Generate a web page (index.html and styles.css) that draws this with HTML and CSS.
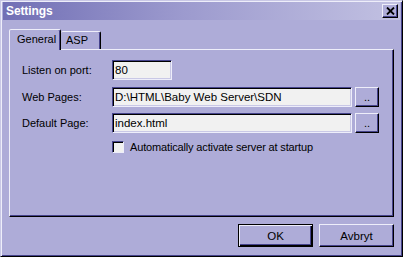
FILE: index.html
```html
<!DOCTYPE html>
<html lang="en">
<head>
  <meta charset="UTF-8" />
  <title>Settings</title>
  <link rel="stylesheet" href="styles.css">
</head>
<body>
  <div class="window">
    <div class="titlebar">
      <span class="title">Settings</span>
      <span class="close">
        <svg width="9" height="8" viewBox="0 0 9 8"><path d="M1 0.5 L8 7.5 M8 0.5 L1 7.5" stroke="#000" stroke-width="1.8" fill="none"/></svg>
      </span>
    </div>
    <div class="content">
      <div class="tabs">
        <div class="tab active">General</div>
        <div class="tab">ASP</div>
      </div>
      <div class="panel">
        <div class="row">
          <label>Listen on port:</label>
          <input class="field port" type="text" value="80" />
        </div>
        <div class="row">
          <label>Web Pages:</label>
          <input class="field wide" type="text" value="D:\HTML\Baby Web Server\SDN" />
          <button class="btn small">..</button>
        </div>
        <div class="row">
          <label>Default Page:</label>
          <input class="field wide" type="text" value="index.html" />
          <button class="btn small">..</button>
        </div>
        <div class="row check-row">
          <span class="check"></span>
          <span>Automatically activate server at startup</span>
        </div>
      </div>
      <div class="actions">
        <button class="btn big default">OK</button>
        <button class="btn big">Avbryt</button>
      </div>
    </div>
  </div>
</body>
</html>
```

FILE: styles.css
```css
* {
  margin: 0;
  padding: 0;
  box-sizing: border-box;
}
body {
  font-family: "Liberation Sans", Arial, sans-serif;
  font-size: 11px;
  color: #000;
  background: #aeacd8;
}
.window {
  width: 403px;
  height: 257px;
  background: #aeacd8;
  border: 1px solid;
  border-color: #c9c8e6 #000 #000 #c9c8e6;
  box-shadow: inset 1px 1px 0 #eeeefa, inset -1px -1px 0 #45438c;
  padding: 1px 2px 2px 2px;
}
.titlebar {
  height: 18px;
  display: flex;
  align-items: center;
  justify-content: space-between;
  padding: 0 2px 0 3px;
  background: linear-gradient(90deg, #716fb5, #9c9ace 45%, #c2c1e2);
}
.title {
  color: #fff;
  font-weight: bold;
  font-size: 12px;
  letter-spacing: -0.1px;
}
.close {
  width: 16px;
  height: 14px;
  display: flex;
  align-items: center;
  justify-content: center;
  background: #aeacd8;
  border: 1px solid;
  border-color: #eeeefa #000 #000 #eeeefa;
  box-shadow: inset -1px -1px 0 #45438c;
}
.content {
  padding: 9px 6px 0 6px;
}
.tabs {
  display: flex;
  align-items: flex-end;
  height: 20px;
}
.tab {
  height: 18px;
  padding: 0 6px 0 5px;
  line-height: 16px;
  border: 1px solid;
  border-bottom: none;
  border-color: #eeeefa #000 transparent #eeeefa;
  box-shadow: inset -1px 0 0 #45438c;
  border-radius: 2px 2px 0 0;
  background: #aeacd8;
}
.tab.active {
  position: relative;
  z-index: 1;
  width: 52px;
  height: 21px;
  margin-bottom: -1px;
  padding-left: 7px;
  line-height: 19px;
}
.tab:not(.active) {
  width: 40px;
  border-left: none;
}
.panel {
  height: 168px;
  border: 1px solid;
  border-color: #eeeefa #000 #000 #eeeefa;
  box-shadow: inset -1px -1px 0 #45438c;
  padding: 10px 0 0 12px;
}
.row {
  display: flex;
  align-items: center;
  height: 20px;
  margin-bottom: 6px;
}
.row:first-child {
  margin-bottom: 7px;
}
.row label {
  width: 90px;
}
.field {
  height: 20px;
  font: inherit;
  font-size: 11.5px;
  color: #000;
  background: #f1f1f1;
  padding: 0 2px;
  border: 1px solid;
  border-color: #45438c #eeeefa #eeeefa #45438c;
  box-shadow: inset 1px 1px 0 #000, inset -1px -1px 0 #c9c8e6;
  outline: none;
}
.port {
  width: 60px;
}
.wide {
  width: 240px;
}
.btn {
  font: inherit;
  font-size: 11.5px;
  color: #000;
  background: #aeacd8;
  border: 1px solid;
  border-color: #eeeefa #000 #000 #eeeefa;
  box-shadow: inset -1px -1px 0 #45438c;
}
.btn.small {
  width: 24px;
  height: 20px;
  margin-left: 3px;
  line-height: 14px;
  font-size: 11px;
}
.check-row {
  height: 12px;
  margin-top: 8px;
  padding-left: 90px;
  letter-spacing: -0.15px;
}
.check {
  width: 12px;
  height: 12px;
  margin-right: 6px;
  background: #f1f1f1;
  border: 1px solid;
  border-color: #45438c #eeeefa #eeeefa #45438c;
  box-shadow: inset 1px 1px 0 #000;
}
.actions {
  display: flex;
  justify-content: flex-end;
  gap: 6px;
  margin-top: 7px;
}
.btn.big {
  width: 75px;
  height: 23px;
}
.btn.default {
  border-color: #000;
  box-shadow: inset 1px 1px 0 #eeeefa, inset -1px -1px 0 #000, inset -2px -2px 0 #45438c;
}
```
